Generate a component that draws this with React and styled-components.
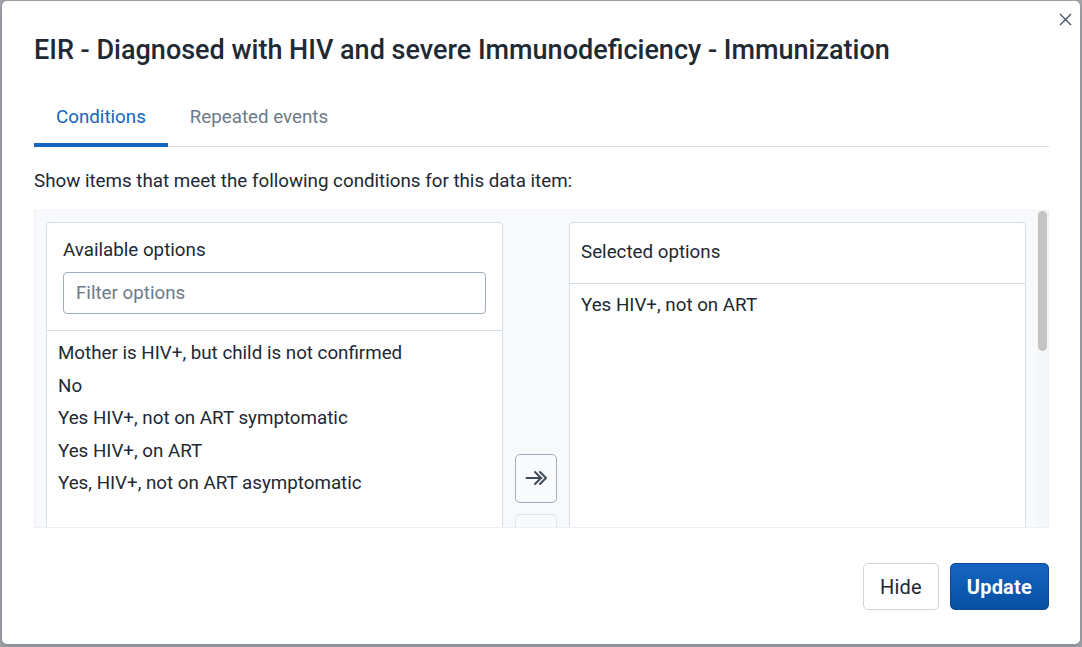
import styled, { createGlobalStyle } from 'styled-components';

const GlobalStyle = createGlobalStyle`
  html, body {
    margin: 0;
    padding: 0;
    background: #a2a5aa;
    font-family: Roboto, "Noto Sans", "Liberation Sans", sans-serif;
    color: #212934;
  }
  * { box-sizing: border-box; }
`

const available = [
  'Mother is HIV+, but child is not confirmed',
  'No',
  'Yes HIV+, not on ART symptomatic',
  'Yes HIV+, on ART',
  'Yes, HIV+, not on ART asymptomatic',
]

const selected = ['Yes HIV+, not on ART']

export default function App() {
  return (
    <>
      <GlobalStyle />
      <Layer>
        <Modal>
          <CloseBtn aria-label="close">
            <svg width="13" height="13" viewBox="0 0 13 13">
              <path d="M1 1L12 12M12 1L1 12" stroke="#4a5768" strokeWidth="1.4" />
            </svg>
          </CloseBtn>

          <Title>EIR - Diagnosed with HIV and severe Immunodeficiency - Immunization</Title>

          <TabBar>
            <Tab active>Conditions</Tab>
            <Tab>Repeated events</Tab>
          </TabBar>

          <Description>Show items that meet the following conditions for this data item:</Description>

          <ScrollArea>
            <ScrollContent>
              <Transfer>
                <Panel>
                  <PanelHeader>
                    <PanelTitle>Available options</PanelTitle>
                    <FilterInput placeholder="Filter options" />
                  </PanelHeader>
                  <OptionList>
                    {available.map((o, i) => <Option key={i}>{o}</Option>)}
                  </OptionList>
                </Panel>

                <Actions>
                  <ActionBtn>
                    <svg width="23" height="16" viewBox="0 0 23 16" fill="none">
                      <path d="M1.5 8h15M10 2l6 6-6 6M15 2l6 6-6 6" stroke="#404b5a" strokeWidth="2" strokeLinecap="round" strokeLinejoin="round" />
                    </svg>
                  </ActionBtn>
                  <ActionBtn disabled />
                </Actions>

                <Panel>
                  <PanelHeader compact>
                    <PanelTitle>Selected options</PanelTitle>
                  </PanelHeader>
                  <OptionList top={5}>
                    {selected.map((o, i) => <Option key={i}>{o}</Option>)}
                  </OptionList>
                </Panel>
              </Transfer>
            </ScrollContent>
            <ScrollTrack>
              <ScrollThumb />
            </ScrollTrack>
          </ScrollArea>

          <Footer>
            <Button>Hide</Button>
            <Button primary>Update</Button>
          </Footer>
        </Modal>
      </Layer>
    </>
  )
}

const Layer = styled.div`
  width: 1082px;
  height: 647px;
  padding: 1px 2px 3px 2px;
`

const Modal = styled.div`
  position: relative;
  width: 1078px;
  height: 643px;
  background: #fff;
  border-radius: 5px;
  box-shadow: 0 2px 6px rgba(33, 41, 52, 0.25);
  padding: 32px 31px 34px 32px;
  display: flex;
  flex-direction: column;
`

const CloseBtn = styled.button`
  position: absolute;
  top: 11px;
  right: 7px;
  width: 15px;
  height: 15px;
  padding: 0;
  border: none;
  background: transparent;
  display: flex;
  align-items: center;
  justify-content: center;
`

const Title = styled.h1`
  margin: 0;
  font-size: 27px;
  font-weight: 500;
  line-height: 34px;
  color: #212934;
`

const TabBar = styled.div`
  display: flex;
  margin-top: 22px;
  border-bottom: 1px solid #d5dde5;
`

const Tab = styled.div`
  padding: 16px 22px 14px 22px;
  margin-bottom: -1px;
  font-size: 18.75px;
  line-height: 24px;
  color: ${({ active }) => (active ? '#1565c0' : '#6e7a8a')};
  border-bottom: 4px solid ${({ active }) => (active ? '#1565c0' : 'transparent')};
`

const Description = styled.p`
  margin: 22px 0 0;
  font-size: 18.75px;
  line-height: 24px;
  color: #212934;
`

const ScrollArea = styled.div`
  flex: 1;
  min-height: 0;
  margin-top: 17px;
  background: #f8f9fa;
  border: 1px solid #eceff3;
  display: flex;
`

const ScrollContent = styled.div`
  flex: 1;
  min-width: 0;
  overflow: hidden;
  padding: 11px 11px 0 11px;
`

const ScrollTrack = styled.div`
  width: 11px;
  padding: 0 1px;
  background: #f6f7f8;
`

const ScrollThumb = styled.div`
  height: 140px;
  border-radius: 5px;
  background: #c4c4c4;
`

const Transfer = styled.div`
  display: flex;
  align-items: stretch;
`

const Panel = styled.div`
  width: 457px;
  height: 572px;
  background: #fff;
  border: 1px solid #d5dde5;
  border-radius: 4px;
  display: flex;
  flex-direction: column;
`

const PanelHeader = styled.div`
  padding: ${({ compact }) => (compact ? '17px 11px 19px' : '15px 16px 16px')};
  border-bottom: 1px solid #d5dde5;
`

const PanelTitle = styled.div`
  font-size: 18.75px;
  line-height: 24px;
  color: #212934;
`

const FilterInput = styled.input`
  display: block;
  width: 100%;
  height: 42px;
  margin-top: 10px;
  padding: 0 12px;
  border: 1px solid #a0adba;
  border-radius: 4px;
  font-family: inherit;
  font-size: 18.75px;
  color: #212934;
  outline: none;
  &::placeholder {
    color: #6e7a8a;
  }
`

const OptionList = styled.div`
  padding: ${({ top }) => top ?? 6}px 0 6px;
`

const Option = styled.div`
  padding: 4px 11px;
  font-size: 18.75px;
  line-height: 24.5px;
  color: #212934;
`

const Actions = styled.div`
  width: 66px;
  display: flex;
  flex-direction: column;
  align-items: center;
  justify-content: center;
  gap: 11px;
`

const ActionBtn = styled.button`
  width: 42px;
  height: 49px;
  padding: 0;
  border-radius: 5px;
  border: 1px solid ${({ disabled }) => (disabled ? '#e0e5ea' : '#a0adba')};
  background: #f9fafb;
  display: flex;
  align-items: center;
  justify-content: center;
`

const Footer = styled.div`
  display: flex;
  justify-content: flex-end;
  gap: 11px;
  margin-top: 35px;
`

const Button = styled.button`
  height: 47px;
  padding: 0 16px;
  border-radius: 5px;
  font-family: inherit;
  font-size: 20px;
  font-weight: ${({ primary }) => (primary ? 700 : 400)};
  letter-spacing: 0.2px;
  color: ${({ primary }) => (primary ? '#fff' : '#212934')};
  border: 1px solid ${({ primary }) => (primary ? '#0b4a94' : '#cfd5db')};
  background: ${({ primary }) =>
    primary ? 'linear-gradient(180deg, #1565c0 0%, #0650a3 100%)' : '#fff'};
`
